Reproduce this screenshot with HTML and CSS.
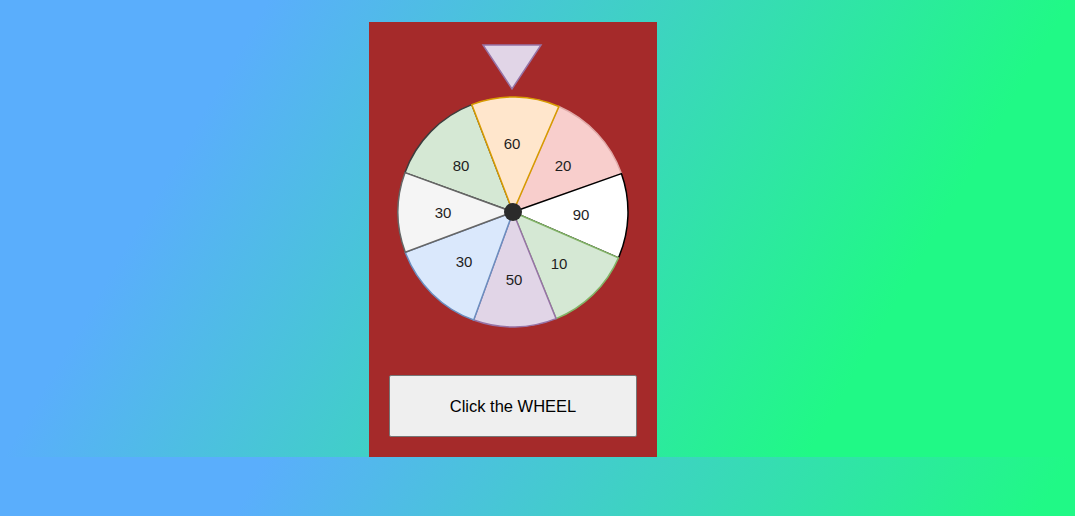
FILE: index.html
```html
<!DOCTYPE html>
<html lang="en">
<head>
<meta charset="utf-8">
<title>Spin the wheel</title>
<link rel="stylesheet" href="styles.css">
</head>
<body>
<div class="page">
  <div class="card">
    <svg class="pointer" width="64" height="50" viewBox="0 0 64 50">
      <polygon points="2,3 60,3 31,47" fill="#e1d5e7" stroke="#9673a6" stroke-width="1.5" stroke-linejoin="miter"/>
    </svg>
    <svg class="wheel" width="240" height="240" viewBox="0 0 240 240">
      <g stroke-width="1.5">
        <path d="M120,120 L11.94,80.67 A115,115 0 0 1 78.79,12.64 Z" fill="#d5e8d4" stroke="#3d3d3d"/>
        <path d="M120,120 L165.85,14.53 A115,115 0 0 1 228.40,81.61 Z" fill="#f8cecc" stroke="#e0a9a7"/>
        <path d="M120,120 L228.40,81.61 A115,115 0 0 1 225.47,165.85 Z" fill="#ffffff" stroke="#000000"/>
        <path d="M120,120 L225.47,165.85 A115,115 0 0 1 163.08,226.63 Z" fill="#d5e8d4" stroke="#82b366"/>
        <path d="M120,120 L163.08,226.63 A115,115 0 0 1 80.67,228.06 Z" fill="#e1d5e7" stroke="#9673a6"/>
        <path d="M120,120 L80.67,228.06 A115,115 0 0 1 12.28,160.27 Z" fill="#dae8fc" stroke="#6c8ebf"/>
        <path d="M120,120 L12.28,160.27 A115,115 0 0 1 11.94,80.67 Z" fill="#f5f5f5" stroke="#666666"/>
        <path d="M120,120 L78.79,12.64 A115,115 0 0 1 165.85,14.53 Z" fill="#ffe6cc" stroke="#d79b00"/>
      </g>
      <g class="labels">
        <text x="119" y="51">60</text>
        <text x="170" y="73">20</text>
        <text x="188" y="122">90</text>
        <text x="166" y="171">10</text>
        <text x="121" y="187">50</text>
        <text x="71" y="169">30</text>
        <text x="50" y="120">30</text>
        <text x="68" y="73">80</text>
      </g>
      <circle cx="120" cy="120" r="9" fill="#2b2b2b"/>
    </svg>
    <button class="spin" type="button">Click the WHEEL</button>
  </div>
</div>
</body>
</html>
```

FILE: styles.css
```css
html, body {
  margin: 0;
  padding: 0;
}

body {
  background: linear-gradient(120deg, #5aaefc 20%, #20f986 80%);
  font-family: "Liberation Sans", Arial, sans-serif;
}

.page {
  display: flex;
  padding: 22px 0 0 369px;
}

.card {
  width: 248px;
  padding: 20px;
  background: #a52a2a;
  display: flex;
  flex-direction: column;
  align-items: center;
}

.pointer {
  display: block;
}

.wheel {
  display: block;
}

.labels text {
  font-family: "Liberation Sans", Arial, sans-serif;
  font-size: 15px;
  fill: #1e1e1e;
  text-anchor: middle;
  dominant-baseline: central;
}

.spin {
  margin-top: 43px;
  width: 248px;
  height: 62px;
  background: #efefef;
  border: 1px solid #767676;
  border-radius: 2px;
  font-family: "Liberation Sans", Arial, sans-serif;
  font-size: 16.5px;
  color: #000;
  padding: 0;
}
```
